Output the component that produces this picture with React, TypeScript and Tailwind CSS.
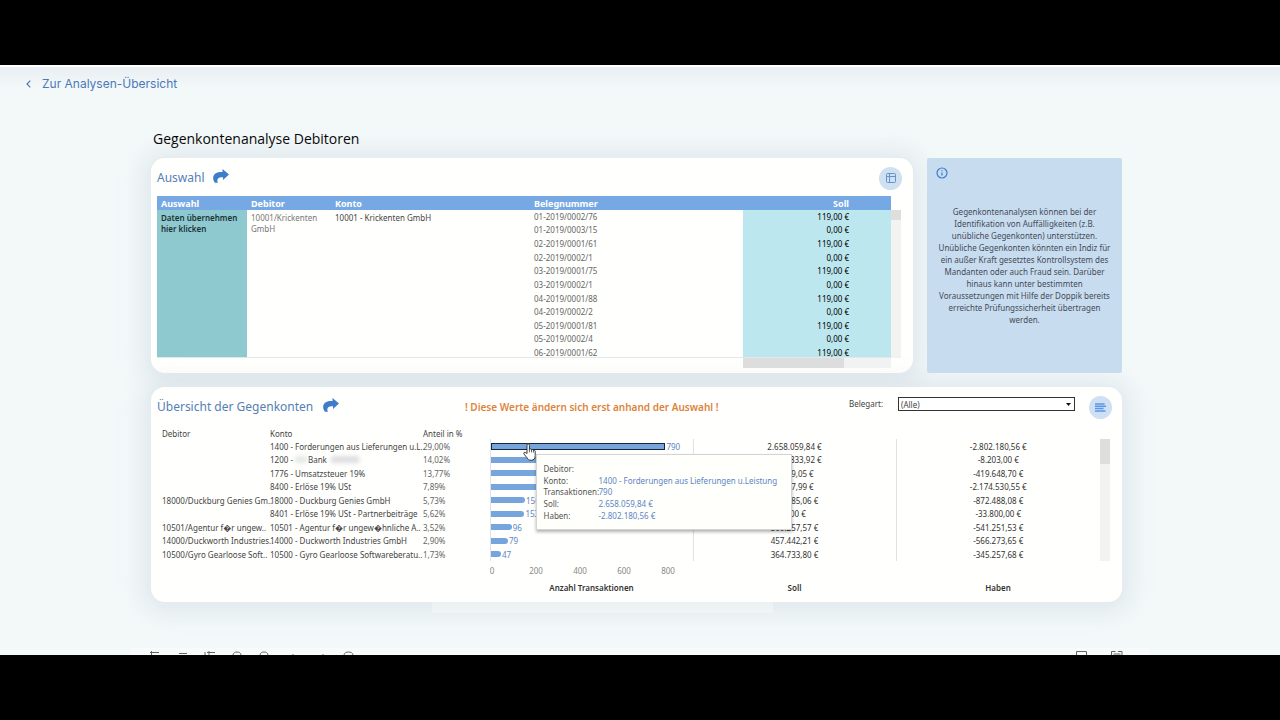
import { useState } from "react";

const belege = [
  { nr: "01-2019/0002/76", soll: "119,00 €" },
  { nr: "01-2019/0003/15", soll: "0,00 €" },
  { nr: "02-2019/0001/61", soll: "119,00 €" },
  { nr: "02-2019/0002/1", soll: "0,00 €" },
  { nr: "03-2019/0001/75", soll: "119,00 €" },
  { nr: "03-2019/0002/1", soll: "0,00 €" },
  { nr: "04-2019/0001/88", soll: "119,00 €" },
  { nr: "04-2019/0002/2", soll: "0,00 €" },
  { nr: "05-2019/0001/81", soll: "119,00 €" },
  { nr: "05-2019/0002/4", soll: "0,00 €" },
  { nr: "06-2019/0001/62", soll: "119,00 €" },
];

const gegenkonten = [
  { debitor: "", konto: "1400 - Forderungen aus Lieferungen u.L..", anteil: "29,00%", count: 790, soll: "2.658.059,84 €", haben: "-2.802.180,56 €" },
  { debitor: "", konto: "1200 -", anteil: "14,02%", count: 382, soll: "1.256.833,92 €", haben: "-8.203,00 €" },
  { debitor: "", konto: "1776 - Umsatzsteuer 19%", anteil: "13,77%", count: 375, soll: "7.009,05 €", haben: "-419.648,70 €" },
  { debitor: "", konto: "8400 - Erlöse 19% USt", anteil: "7,89%", count: 215, soll: "2.617,99 €", haben: "-2.174.530,55 €" },
  { debitor: "18000/Duckburg Genies Gm..", konto: "18000 - Duckburg Genies GmbH", anteil: "5,73%", count: 156, soll: "784.385,06 €", haben: "-872.488,08 €" },
  { debitor: "", konto: "8401 - Erlöse 19% USt - Partnerbeiträge", anteil: "5,62%", count: 153, soll: "0,00 €", haben: "-33.800,00 €" },
  { debitor: "10501/Agentur f\uFFFDr ungew..", konto: "10501 - Agentur f\uFFFDr ungew\uFFFDhnliche A..", anteil: "3,52%", count: 96, soll: "500.257,57 €", haben: "-541.251,53 €" },
  { debitor: "14000/Duckworth Industries..", konto: "14000 - Duckworth Industries GmbH", anteil: "2,90%", count: 79, soll: "457.442,21 €", haben: "-566.273,65 €" },
  { debitor: "10500/Gyro Gearloose Soft..", konto: "10500 - Gyro Gearloose Softwareberatu..", anteil: "1,73%", count: 47, soll: "364.733,80 €", haben: "-345.257,68 €" },
];

const tooltipRows = [
  ["Debitor:", ""],
  ["Konto:", "1400 - Forderungen aus Lieferungen u.Leistung"],
  ["Transaktionen:", "790"],
  ["Soll:", "2.658.059,84 €"],
  ["Haben:", "-2.802.180,56 €"],
];

const AXIS_MAX = 912;

function ShareIcon() {
  return (
    <svg viewBox="0 0 16 14" className="h-[14px] w-4" fill="#3f7dcb">
      <path d="M9.5 0 16 5.5 10 11V8.3C7 7.8 4.600 8.700 4.300 11.300 4.200 12.300 4.500 13 5 13.800H2C.5 12 0 10.300.2 8.300.7 4.500 4.500 2.700 9.500 3Z" />
    </svg>
  );
}

function HandCursor() {
  return (
    <svg viewBox="0 0 13 18" className="h-[18px] w-[13px]">
      <path
        d="M4 10.500V2.200c0-1.800 2.400-1.800 2.400 0v4.300c.3-1 2-.9 2.100.4.5-.8 1.900-.6 1.900.6.6-.6 1.800-.2 1.800.8v4.200c0 2.800-1.200 4.800-4 4.800-2.600 0-3.400-1-4.300-2.600L.9 10.900c-.7-1.200.8-2.200 1.800-1.200Z"
        fill="#fff"
        stroke="#222"
        strokeWidth="0.9"
      />
      <path d="M6.400 6.500v2.800M8.500 7v2.400M10.400 7.600v2" stroke="#222" strokeWidth="0.7" />
    </svg>
  );
}

function ChartTooltip() {
  return (
    <div className="absolute left-[45px] top-[15px] z-10 w-[256px] border border-[#d4d4d4] bg-[#fffffb] py-2 pl-[7px] shadow-[0_2px_3px_rgba(0,0,0,0.3)]">
      <dl className="grid h-[58px] grid-cols-[55px_1fr] content-stretch">
        {tooltipRows.map(([label, value]) => (
          <div key={label} className="col-span-2 grid grid-cols-subgrid items-center leading-[11px]">
            <dt className="text-[#555]">{label}</dt>
            <dd className="whitespace-nowrap text-[#5b86c4]">{value}</dd>
          </div>
        ))}
      </dl>
    </div>
  );
}

function AuswahlCard() {
  return (
    <section className="min-w-0 flex-1 rounded-[14px] bg-[#fffffd] pb-[5px] pl-[6px] pr-3 shadow-[0_2px_22px_8px_rgba(190,202,214,0.35)]">
      <div className="flex h-[38px] items-center pt-[2px]">
        <h2 className="text-[12px] text-[#5580b5]">Auswahl</h2>
        <button aria-label="Auswahl teilen" className="mb-1 ml-2">
          <ShareIcon />
        </button>
        <button
          aria-label="Tabellenansicht"
          className="-mr-px ml-auto flex size-[23px] items-center justify-center rounded-full bg-[#cfe0f1]"
        >
          <svg viewBox="0 0 10 10" className="size-[10px]" fill="none" stroke="#6592cc">
            <rect x="0.5" y="0.5" width="9" height="9" rx="1" />
            <path d="M3.500 0.500v9M0.500 3.500h9" />
          </svg>
        </button>
      </div>

      <div className="flex">
        <div className="h-[162px] flex-1 overflow-hidden border-b border-[#e4e8e8]">
          <table className="h-[164px] w-full table-fixed text-left align-top leading-[11px]">
            <colgroup>
              <col className="w-[90px]" />
              <col className="w-[84px]" />
              <col className="w-[199px]" />
              <col />
              <col className="w-[148px]" />
            </colgroup>
            <thead className="bg-[#76a8e3] text-[9px] text-white">
              <tr className="h-[14px]">
                <th className="px-1">Auswahl</th>
                <th className="px-1">Debitor</th>
                <th className="px-1">Konto</th>
                <th className="px-1">Belegnummer</th>
                <th className="pr-[42px] text-right">Soll</th>
              </tr>
            </thead>
            <tbody>
              {belege.map((b, i) => (
                <tr key={b.nr}>
                  {i === 0 && (
                    <>
                      <td rowSpan={11} className="bg-[#8fc9d0] px-1 pt-[2px] align-top">
                        <button className="text-left font-semibold text-[#1d3135]">
                          Daten übernehmen hier klicken
                        </button>
                      </td>
                      <td rowSpan={11} className="px-1 pt-[2px] align-top text-[#777]">
                        10001/Krickenten GmbH
                      </td>
                      <td rowSpan={11} className="px-1 pt-[2px] align-top text-[#444]">
                        10001 - Krickenten GmbH
                      </td>
                    </>
                  )}
                  <td className="px-1 leading-[8px] text-[#666]">{b.nr}</td>
                  <td className="bg-[#bde7ee] pr-[42px] text-right leading-[8px] text-black">{b.soll}</td>
                </tr>
              ))}
            </tbody>
          </table>
        </div>
        <div className="mt-[14px] w-[10px] bg-[#f3f3f3]">
          <div className="h-[10px] bg-[#dedede]" />
        </div>
      </div>
      <div className="ml-auto mr-[10px] h-[10px] w-[148px] bg-[#f3f3f3]">
        <div className="h-full w-[101px] bg-[#dedede]" />
      </div>
    </section>
  );
}

function InfoCard() {
  return (
    <aside className="relative flex w-[195px] items-center rounded-[2px] bg-[#c8dcf0] px-2 text-center leading-[12px] text-[#444b55]">
      <svg viewBox="0 0 12 12" className="absolute left-[9px] top-[9px] size-3" fill="none" stroke="#3f7dcb" strokeWidth="1.200">
        <circle cx="6" cy="6" r="5" />
        <path d="M6 5.400v3M6 3.300v1" />
      </svg>
      <p>
        Gegenkontenanalysen können bei der Identifikation von Auffälligkeiten (z.B. unübliche
        Gegenkonten) unterstützen. Unübliche Gegenkonten könnten ein Indiz für ein außer Kraft
        gesetztes Kontrollsystem des Mandanten oder auch Fraud sein. Darüber hinaus kann unter
        bestimmten Voraussetzungen mit Hilfe der Doppik bereits erreichte Prüfungssicherheit
        übertragen werden.
      </p>
    </aside>
  );
}

function GegenkontenCard() {
  const [belegart, setBelegart] = useState("alle");

  return (
    <section className="rounded-[14px] bg-[#fffffd] pb-[7px] pl-[6px] pr-3 shadow-[0_2px_22px_8px_rgba(190,202,214,0.35)]">
      <div className="flex h-10 items-center">
        <div className="flex w-[308px] items-center">
          <h2 className="text-[12px] text-[#5580b5]">Übersicht der Gegenkonten</h2>
          <button aria-label="Übersicht teilen" className="mb-1 ml-[10px]">
            <ShareIcon />
          </button>
        </div>
        <p className="text-[10px] font-semibold text-[#dc8440]">
          ! Diese Werte ändern sich erst anhand der Auswahl !
        </p>
        <div className="mb-[6px] ml-auto flex items-center">
          <label htmlFor="belegart" className="w-[49px] text-[#444]">
            Belegart:
          </label>
          <div className="relative">
            <select
              id="belegart"
              value={belegart}
              onChange={(e) => setBelegart(e.target.value)}
              className="block h-[14px] w-[177px] appearance-none border border-[#333] bg-white pl-[2px] leading-[11px] text-[#444]"
            >
              <option value="alle">(Alle)</option>
            </select>
            <svg viewBox="0 0 5 3" className="pointer-events-none absolute right-1 top-[6px] h-[3px] w-[5px]">
              <path d="M0 0h5L2.500 3Z" fill="#111" />
            </svg>
          </div>
        </div>
        <button
          aria-label="Diagrammansicht"
          className="-mr-[2px] ml-[14px] flex size-[23px] items-center justify-center rounded-full bg-[#cfe0f4]"
        >
          <svg viewBox="0 0 11 9" className="h-[9px] w-[11px]" stroke="#5a95e6" strokeWidth="1.500">
            <path d="M0 1h9.500M0 3.300h11M0 5.600h8.500M0 7.900h10.500" />
          </svg>
        </button>
      </div>

      <div className="flex">
        <table className="w-full min-w-0 flex-1 table-fixed whitespace-nowrap text-left leading-[11px] text-[#444]">
          <colgroup>
            <col className="w-[109px]" />
            <col className="w-[153px]" />
            <col className="w-[71px]" />
            <col className="w-[203px]" />
            <col className="w-[203px]" />
            <col />
          </colgroup>
          <thead>
            <tr className="h-3">
              <th className="pl-[5px] font-normal">Debitor</th>
              <th className="pl-1 font-normal">Konto</th>
              <th className="pl-1 font-normal">Anteil in %</th>
              <td colSpan={3} />
            </tr>
          </thead>
          <tbody>
            {gegenkonten.map((g, i) => (
              <tr key={g.konto} className={i % 2 === 0 ? "h-[14px]" : "h-[13px]"}>
                <td className="pl-[5px]">{g.debitor}</td>
                <td className="pl-1">
                  {g.konto}
                  {i === 1 && (
                    <span className="inline-flex items-center">
                      <span className="mx-px ml-[2px] h-[7px] w-3 bg-[#e3eae6] blur-[2px]" />
                      Bank
                      <span className="ml-1 h-[7px] w-7 bg-[#dedee2] blur-[2px]" />
                    </span>
                  )}
                </td>
                <td className="pl-1 text-[#666]">{g.anteil}</td>
                <td className="relative border-l border-[#e2e2e2]">
                  <div className="flex items-center text-[#5b86c4]">
                    <div
                      className={
                        i === 0
                          ? "h-[7px] shrink-0 border border-[#16263c] bg-[#76a5de]"
                          : "h-[6px] shrink-0 rounded-r-full bg-[#76a5de]"
                      }
                      style={{ width: `${(g.count / AXIS_MAX) * 100}%` }}
                    />
                    <span className="pl-px">{g.count}</span>
                  </div>
                  {i === 0 && (
                    <>
                      <ChartTooltip />
                      <div className="absolute left-[32px] top-[4px] z-20">
                        <HandCursor />
                      </div>
                    </>
                  )}
                </td>
                <td className="border-l border-[#e2e2e2] text-center text-[#333]">{g.soll}</td>
                <td className="border-l border-[#e2e2e2] text-center text-[#333]">{g.haben}</td>
              </tr>
            ))}
          </tbody>
          <tfoot>
            <tr className="h-[18px] text-[#888]">
              <td colSpan={3} />
              <td>
                <div className="-ml-5 flex text-center">
                  {[0, 200, 400, 600, 800].map((tick) => (
                    <span key={tick} className="w-11 shrink-0">
                      {tick}
                    </span>
                  ))}
                </div>
              </td>
              <td colSpan={2} />
            </tr>
            <tr className="h-4 text-center text-[#333]">
              <td colSpan={3} />
              <th className="font-semibold">Anzahl Transaktionen</th>
              <th className="font-semibold">Soll</th>
              <th className="font-semibold">Haben</th>
            </tr>
          </tfoot>
        </table>
        <div className="mb-[34px] mt-3 w-[10px] shrink-0 bg-[#f3f3f3]">
          <div className="h-[25px] bg-[#dedede]" />
        </div>
      </div>
    </section>
  );
}

function BottomToolbar() {
  return (
    <div className="mx-[130px] flex h-[7px] items-end justify-between overflow-hidden bg-[#f9fbfb] pl-5 pr-[26px] text-[#666]">
      <svg viewBox="0 0 210 4" className="h-1 w-[210px]" fill="none" stroke="currentColor">
        <path d="M0 1.500h9M1.500 0v4M29 2.500h8M55 1v3M57 1.500h8M59 0v4M83 4c0-4 8-4 8 0M110 4c0-4 8-4 8 0M143 3v1M173 3v1M194 4c0-4 9-4 9 0" />
      </svg>
      <svg viewBox="0 0 48 4" className="h-1 w-12" fill="none" stroke="currentColor">
        <path d="M0.500 4V.5h10V4M35.500 4V.5h4M42 .5h4V4M37.500 3h7" />
      </svg>
    </div>
  );
}

export default function App() {
  return (
    <div className="flex min-h-screen flex-col bg-black font-['Noto_Sans',sans-serif] text-[8px]">
      <div className="h-[65px]" />
      <main className="flex flex-1 flex-col overflow-hidden border-t-2 border-white bg-[#f3f8f9] bg-[linear-gradient(to_bottom,#e9eff2,#f3f8f9_20px)]">
        <nav className="pl-[26px] pt-2">
          <a
            href="#analysen"
            className="inline-flex items-center gap-[11px] font-['Inter',sans-serif] text-[12px] leading-[18px] text-[#4c78b8]"
          >
            <svg viewBox="0 0 5 8" className="h-2 w-[5px]" fill="none" stroke="currentColor" strokeWidth="1.200">
              <path d="M4.300 0.700 1 4l3.300 3.300" />
            </svg>
            Zur Analysen-Übersicht
          </a>
        </nav>

        <div className="flex flex-1 flex-col pl-[151px] pr-[158px] pt-9">
          <h1 className="pl-[2px] font-['Open_Sans','Noto_Sans',sans-serif] text-[14px] leading-5 text-black">
            Gegenkontenanalyse Debitoren
          </h1>
          <div className="mt-[9px] flex h-[215px] gap-[14px]">
            <AuswahlCard />
            <InfoCard />
          </div>
          <div className="mt-[14px]">
            <GegenkontenCard />
          </div>
          <div className="ml-[281px] h-[11px] w-[341px] bg-white/30" />
        </div>
        <BottomToolbar />
      </main>
      <div className="h-[65px]" />
    </div>
  );
}
